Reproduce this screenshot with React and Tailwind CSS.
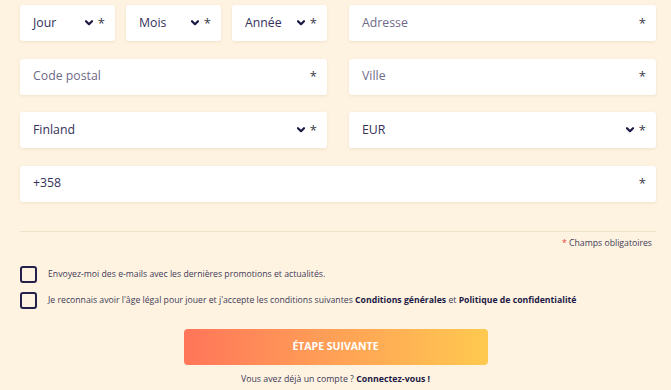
import React from 'react';

const font = { fontFamily: '"Open Sans", "Noto Sans", sans-serif' };

function Chevron() {
  return (
    <svg width="8" height="6" viewBox="0 0 8 6" className="shrink-0">
      <path d="M1 1.2l3 3 3-3" fill="none" stroke="#1d1a45" strokeWidth="2.2" strokeLinecap="round" strokeLinejoin="round" />
    </svg>
  );
}

function Field({ label, value, select }) {
  return (
    <div className="h-[36px] bg-white rounded-[3px] shadow-[0_1px_3px_rgba(180,150,110,0.18)] flex items-center pl-[13px] pr-[10px]">
      <span className={`flex-1 text-[12.3px] ${value ? 'text-[#35315a]' : 'text-[#6f6b88]'}`}>{label}</span>
      {select && <span className="mr-[5px] flex items-center"><Chevron /></span>}
      <span className="text-[13px] text-[#3a3a4a] leading-none">*</span>
    </div>
  );
}

function Checkbox({ children }) {
  return (
    <div className="flex items-center gap-[11px]">
      <div className="w-[17px] h-[17px] shrink-0 border-2 border-[#24204a] rounded-[3px] bg-transparent" />
      <span className="text-[8.7px] text-[#3e3b58]">{children}</span>
    </div>
  );
}

export default function App() {
  return (
    <div className="min-h-screen w-full bg-[#fef3e1] pt-[5px] pl-[20px] pr-[15px]" style={font}>
      {/* champs */}
      <div className="grid grid-cols-2 gap-x-[22px] gap-y-[17.5px]">
        <div className="grid grid-cols-3 gap-x-[11px]">
          <Field label="Jour" value select />
          <Field label="Mois" value select />
          <Field label="Année" value select />
        </div>
        <Field label="Adresse" />
        <Field label="Code postal" />
        <Field label="Ville" />
        <Field label="Finland" value select />
        <Field label="EUR" value select />
        <div className="col-span-2">
          <Field label="+358" value />
        </div>
      </div>

      <div className="mt-[29px] border-t border-[#f1e3c9]" />
      <div className="text-right text-[8.7px] text-[#3e3b58] mt-[5px] pr-[4px]">
        <span className="text-[#e8413a]">*</span> Champs obligatoires
      </div>

      <div className="mt-[16px] flex flex-col gap-[9px]">
        <Checkbox>Envoyez-moi des e-mails avec les dernières promotions et actualités.</Checkbox>
        <Checkbox>
          Je reconnais avoir l'âge légal pour jouer et j'accepte les conditions suivantes{' '}
          <b className="text-[#1d1a45] font-bold">Conditions générales</b> et{' '}
          <b className="text-[#1d1a45] font-bold">Politique de confidentialité</b>
        </Checkbox>
      </div>

      <div className="flex flex-col items-center mt-[20px] pr-[5px]">
        <button className="w-[304px] h-[36px] rounded-[4px] bg-gradient-to-r from-[#ff7559] to-[#ffc94f] text-white text-[10.5px] font-bold">
          ÉTAPE SUIVANTE
        </button>
        <div className="mt-[8px] text-[8.8px] text-[#3e3b58]">
          Vous avez déjà un compte ? <b className="text-[#1d1a45] font-bold">Connectez-vous !</b>
        </div>
      </div>
    </div>
  );
}
